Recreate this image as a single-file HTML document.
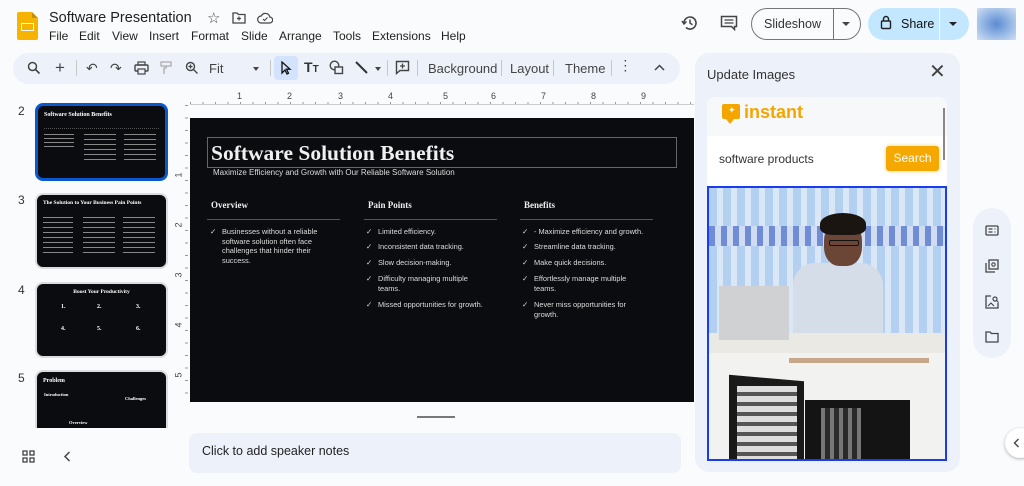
<!DOCTYPE html>
<html><head><meta charset="utf-8"><style>
*{box-sizing:border-box;margin:0;padding:0}
body{width:1024px;height:486px;overflow:hidden;background:#f9fbfd;font-family:"Liberation Sans",Arial,sans-serif;color:#1f1f1f;position:relative}
.a{position:absolute}
.menu span{position:absolute;white-space:nowrap}
.tb{color:#444;font-size:13px}
.sep{position:absolute;top:60px;width:1px;height:16px;background:#c7c7c7}
.slide{background:#0b0c0f;color:#eee}
.serif{font-family:"Liberation Serif",serif;font-weight:bold}
.li{font-size:7.4px;line-height:9.5px;color:#ddd;position:absolute}
.li b{position:absolute;left:-12px;font-weight:normal}
.thumb{position:absolute;left:35px;width:133px;background:#0b0c0f;border-radius:8px;border:2px solid #dadce0;overflow:hidden}
.num{position:absolute;left:18px;font-size:12px;color:#333}
</style></head><body>
<!-- logo -->
<div class="a" style="left:17px;top:12px;width:21px;height:28px;background:#f6b400;border-radius:2px"></div>
<div class="a" style="left:32px;top:12px;width:6px;height:6px;background:#f9fbfd"></div>
<div class="a" style="left:32px;top:12px;width:0;height:0;border-left:6px solid #c98f00;border-top:6px solid transparent"></div>
<div class="a" style="left:21px;top:23px;width:13px;height:8px;border:1.6px solid #fff"></div>
<div class="a" style="left:49px;top:10px;font-size:14.5px">Software Presentation</div>
<div class="a" style="left:207px;top:9px;font-size:15px;color:#444">☆</div>
<svg class="a" style="left:232px;top:12px" width="14" height="12" viewBox="0 0 14 12"><path d="M1 1h4l1.5 1.5H13V11H1z" fill="none" stroke="#444" stroke-width="1.3"/><path d="M7 4.5v4M5 6.5h4" stroke="#444" stroke-width="1.2"/></svg>
<svg class="a" style="left:257px;top:12px" width="16" height="12" viewBox="0 0 16 12"><path d="M4 11h8.5a3 3 0 0 0 .3-6A4.5 4.5 0 0 0 4.3 4 3.5 3.5 0 0 0 4 11z" fill="none" stroke="#444" stroke-width="1.2"/><path d="M6 7l1.5 1.5L10.5 5.5" fill="none" stroke="#444" stroke-width="1.1"/></svg>
<div class="a menu" style="left:0;top:29px;font-size:12px;color:#1f1f1f;width:500px;height:16px"><span style="left:49px">File</span><span style="left:79px">Edit</span><span style="left:112px">View</span><span style="left:149px">Insert</span><span style="left:191px">Format</span><span style="left:241px">Slide</span><span style="left:279px">Arrange</span><span style="left:333px">Tools</span><span style="left:372px">Extensions</span><span style="left:441px">Help</span></div>

<!-- header right -->
<svg class="a" style="left:681px;top:14px" width="18" height="18" viewBox="0 0 18 18"><path d="M3 9a6 6 0 1 1 2 4.5" fill="none" stroke="#444" stroke-width="1.6"/><path d="M1 7l2 3 2.5-2.5" fill="none" stroke="#444" stroke-width="1.5"/><path d="M9 5.5V9l2.5 1.8" fill="none" stroke="#444" stroke-width="1.5"/></svg>
<svg class="a" style="left:720px;top:15px" width="18" height="17" viewBox="0 0 18 17"><path d="M1.5 1.5h15v10h-2v3l-3-3h-10z" fill="none" stroke="#444" stroke-width="1.5"/><path d="M4.5 5h9M4.5 8h9" stroke="#444" stroke-width="1.3"/></svg>
<div class="a" style="left:751px;top:8px;width:110px;height:32px;border:1px solid #747775;border-radius:16px"></div>
<div class="a" style="left:833px;top:8px;width:1px;height:32px;background:#747775"></div>
<div class="a" style="left:764px;top:17px;font-size:12.5px;color:#333">Slideshow</div>
<div class="a" style="left:842px;top:22px;border:4px solid transparent;border-top:4px solid #444"></div>
<div class="a" style="left:868px;top:8px;width:101px;height:32px;background:#c2e7ff;border-radius:16px"></div>
<div class="a" style="left:939px;top:8px;width:1px;height:32px;background:#f9fbfd"></div>
<svg class="a" style="left:880px;top:15px" width="12" height="15" viewBox="0 0 12 15"><rect x="1.5" y="6" width="9" height="7.5" rx="1" fill="none" stroke="#222" stroke-width="1.4"/><path d="M3.5 6V4a2.5 2.5 0 0 1 5 0v2" fill="none" stroke="#222" stroke-width="1.4"/></svg>
<div class="a" style="left:901px;top:17px;font-size:12.5px;color:#111">Share</div>
<div class="a" style="left:949px;top:22px;border:4px solid transparent;border-top:4px solid #222"></div>
<div class="a" style="left:977px;top:8px;width:39px;height:32px;background:radial-gradient(ellipse at 50% 50%,#5b8bd0 0%,#8fb2e3 45%,#cfe0f3 100%)"></div>

<!-- toolbar -->
<div class="a" style="left:13px;top:53px;width:667px;height:31px;background:#edf2fa;border-radius:16px"></div>
<svg class="a" style="left:27px;top:61px" width="14" height="14" viewBox="0 0 14 14"><circle cx="5.5" cy="5.5" r="4" fill="none" stroke="#444" stroke-width="1.5"/><path d="M8.5 8.5l4 4" stroke="#444" stroke-width="1.6"/></svg>
<div class="a tb" style="left:55px;top:58px;font-size:17px">+</div>
<div class="sep" style="left:76px"></div>
<div class="a tb" style="left:86px;top:60px;font-size:14px">↶</div>
<div class="a tb" style="left:110px;top:60px;font-size:14px">↷</div>
<svg class="a" style="left:134px;top:61px" width="15" height="14" viewBox="0 0 15 14"><rect x="1" y="4" width="13" height="6" rx="1" fill="none" stroke="#444" stroke-width="1.4"/><rect x="4" y="1" width="7" height="3" fill="none" stroke="#444" stroke-width="1.2"/><rect x="4" y="8" width="7" height="5" fill="#edf2fa" stroke="#444" stroke-width="1.2"/></svg>
<svg class="a" style="left:160px;top:61px" width="12" height="14" viewBox="0 0 12 14"><rect x="1" y="1" width="10" height="4" fill="none" stroke="#aaa" stroke-width="1.2"/><path d="M6 5v2H4v6" fill="none" stroke="#aaa" stroke-width="1.3"/></svg>
<svg class="a" style="left:185px;top:61px" width="14" height="14" viewBox="0 0 14 14"><circle cx="5.5" cy="5.5" r="4" fill="none" stroke="#444" stroke-width="1.4"/><path d="M8.5 8.5l4 4M5.5 3.5v4M3.5 5.5h4" stroke="#444" stroke-width="1.3"/></svg>
<div class="a tb" style="left:209px;top:61px">Fit</div>
<div class="a" style="left:253px;top:67px;border:3.5px solid transparent;border-top:4px solid #444"></div>
<div class="sep" style="left:270px"></div>
<div class="a" style="left:274px;top:56px;width:24px;height:24px;background:#d3e3fd;border-radius:4px"></div>
<svg class="a" style="left:280px;top:61px" width="12" height="14" viewBox="0 0 12 14"><path d="M2 1v11l3-3 2 4 1.5-.8-2-4H10z" fill="none" stroke="#111" stroke-width="1.3"/></svg>
<div class="a tb" style="left:304px;top:59px;font-size:14px;font-weight:bold;color:#333">T<span style="font-size:10px">T</span></div>
<svg class="a" style="left:329px;top:60px" width="15" height="15" viewBox="0 0 15 15"><circle cx="5.5" cy="5.5" r="4.3" fill="none" stroke="#444" stroke-width="1.4"/><rect x="6" y="7" width="7.5" height="6.5" fill="#edf2fa" stroke="#444" stroke-width="1.4"/></svg>
<svg class="a" style="left:355px;top:61px" width="13" height="13" viewBox="0 0 13 13"><path d="M1 1l11 11" stroke="#333" stroke-width="2"/></svg>
<div class="a" style="left:375px;top:67px;border:3.5px solid transparent;border-top:4px solid #444"></div>
<div class="sep" style="left:387px"></div>
<svg class="a" style="left:395px;top:60px" width="15" height="15" viewBox="0 0 15 15"><path d="M1.5 1.5h12v9H5l-3.5 3z" fill="none" stroke="#444" stroke-width="1.4"/><path d="M7.5 3.5v5M5 6h5" stroke="#444" stroke-width="1.3"/></svg>
<div class="sep" style="left:417px"></div>
<div class="a tb" style="left:428px;top:61px">Background</div>
<div class="sep" style="left:501px"></div>
<div class="a tb" style="left:510px;top:61px">Layout</div>
<div class="sep" style="left:553px"></div>
<div class="a tb" style="left:565px;top:61px">Theme</div>
<div class="sep" style="left:611px"></div>
<div class="a tb" style="left:624px;top:59px;font-weight:bold;line-height:5px;font-size:10px">·<br>·<br>·</div>
<svg class="a" style="left:654px;top:64px" width="11" height="7" viewBox="0 0 11 7"><path d="M1 6l4.5-4.5L10 6" fill="none" stroke="#444" stroke-width="1.5"/></svg>

<!-- filmstrip -->
<div class="num" style="top:104px">2</div>
<div class="thumb" style="top:103px;height:78px;border:3px solid #0b57d0">
 <div class="serif a" style="left:6px;top:6px;font-size:6px;color:#fff">Software Solution Benefits</div>
 <div class="a" style="left:6px;top:22px;width:115px;height:1px;border-top:1px dotted #555"></div>
 <div class="a" style="left:6px;top:28px;width:30px;height:16px;background:repeating-linear-gradient(#888 0 1px,transparent 1px 4px)"></div>
 <div class="a" style="left:46px;top:28px;width:32px;height:28px;background:repeating-linear-gradient(#888 0 1px,transparent 1px 5px)"></div>
 <div class="a" style="left:86px;top:28px;width:32px;height:28px;background:repeating-linear-gradient(#888 0 1px,transparent 1px 5px)"></div>
</div>
<div class="num" style="top:193px">3</div>
<div class="thumb" style="top:193px;height:76px">
 <div class="serif a" style="left:6px;top:5px;font-size:5.5px;color:#fff">The Solution to Your Business Pain Points</div>
 <div class="a" style="left:6px;top:22px;width:30px;height:40px;background:repeating-linear-gradient(#888 0 1px,transparent 1px 5px)"></div>
 <div class="a" style="left:46px;top:22px;width:32px;height:40px;background:repeating-linear-gradient(#888 0 1px,transparent 1px 5px)"></div>
 <div class="a" style="left:86px;top:22px;width:32px;height:40px;background:repeating-linear-gradient(#888 0 1px,transparent 1px 5px)"></div>
</div>
<div class="num" style="top:283px">4</div>
<div class="thumb" style="top:282px;height:76px">
 <div class="serif a" style="left:0;width:129px;text-align:center;top:5px;font-size:5.5px;color:#fff">Boost Your Productivity</div>
 <div class="serif a" style="left:24px;top:20px;font-size:6px;color:#fff">1.</div><div class="serif a" style="left:60px;top:20px;font-size:6px;color:#fff">2.</div><div class="serif a" style="left:99px;top:20px;font-size:6px;color:#fff">3.</div>
 <div class="serif a" style="left:24px;top:42px;font-size:6px;color:#fff">4.</div><div class="serif a" style="left:60px;top:42px;font-size:6px;color:#fff">5.</div><div class="serif a" style="left:99px;top:42px;font-size:6px;color:#fff">6.</div>
</div>
<div class="num" style="top:371px">5</div>
<div class="thumb" style="top:370px;height:58px;border-bottom:none;border-radius:8px 8px 0 0">
 <div class="serif a" style="left:6px;top:6px;font-size:6px;color:#fff">Problem</div>
 <div class="serif a" style="left:7px;top:20px;font-size:4.5px;color:#fff">Introduction</div>
 <div class="serif a" style="left:88px;top:24px;font-size:4.5px;color:#fff">Challenges</div>
 <div class="serif a" style="left:32px;top:48px;font-size:4.5px;color:#fff">Overview</div>
</div>

<!-- rulers -->
<div class="a" style="left:190px;top:92px;width:504px;height:13px;background:repeating-linear-gradient(90deg,#999 0 1px,transparent 1px 12.5px) bottom/100% 3px no-repeat"></div>
<div class="a" style="left:190px;top:104px;width:504px;height:1px;background:#ccc"></div>
<div class="a" style="left:170px;top:105px;width:18px;height:300px;background:repeating-linear-gradient(#999 0 1px,transparent 1px 12.5px) right/3px 100% no-repeat"></div>
<div class="a" style="left:237px;top:91px;font-size:9px;color:#444">1</div>
<div class="a" style="left:287px;top:91px;font-size:9px;color:#444">2</div>
<div class="a" style="left:338px;top:91px;font-size:9px;color:#444">3</div>
<div class="a" style="left:388px;top:91px;font-size:9px;color:#444">4</div>
<div class="a" style="left:443px;top:91px;font-size:9px;color:#444">5</div>
<div class="a" style="left:491px;top:91px;font-size:9px;color:#444">6</div>
<div class="a" style="left:541px;top:91px;font-size:9px;color:#444">7</div>
<div class="a" style="left:591px;top:91px;font-size:9px;color:#444">8</div>
<div class="a" style="left:641px;top:91px;font-size:9px;color:#444">9</div>
<div class="a" style="left:176px;top:170px;font-size:9px;color:#444;transform:rotate(-90deg)">1</div>
<div class="a" style="left:176px;top:220px;font-size:9px;color:#444;transform:rotate(-90deg)">2</div>
<div class="a" style="left:176px;top:270px;font-size:9px;color:#444;transform:rotate(-90deg)">3</div>
<div class="a" style="left:176px;top:320px;font-size:9px;color:#444;transform:rotate(-90deg)">4</div>
<div class="a" style="left:176px;top:370px;font-size:9px;color:#444;transform:rotate(-90deg)">5</div>

<!-- slide -->
<div class="a slide" style="left:190px;top:118px;width:504px;height:284px">
 <div class="a" style="left:17px;top:19px;width:470px;height:31px;border:1px solid #666"></div>
 <div class="a serif" style="left:21px;top:23px;font-size:21.5px;color:#f0f0f0">Software Solution Benefits</div>
 <div class="a" style="left:23px;top:50px;font-size:8px;color:#ddd">Maximize Efficiency and Growth with Our Reliable Software Solution</div>
 <div class="a serif" style="left:21px;top:82px;font-size:9px;color:#eee">Overview</div>
 <div class="a serif" style="left:178px;top:82px;font-size:9px;color:#eee">Pain Points</div>
 <div class="a serif" style="left:334px;top:82px;font-size:9px;color:#eee">Benefits</div>
 <div class="a" style="left:17px;top:101px;width:133px;height:1px;background:#555"></div>
 <div class="a" style="left:174px;top:101px;width:133px;height:1px;background:#555"></div>
 <div class="a" style="left:330px;top:101px;width:133px;height:1px;background:#555"></div>
 <div class="li" style="left:32px;top:109px;width:110px"><b>✓</b>Businesses without a reliable software solution often face challenges that hinder their success.</div>
 <div class="li" style="left:188px;top:109px"><b>✓</b>Limited efficiency.</div>
 <div class="li" style="left:188px;top:124px"><b>✓</b>Inconsistent data tracking.</div>
 <div class="li" style="left:188px;top:140px"><b>✓</b>Slow decision-making.</div>
 <div class="li" style="left:188px;top:156px;width:110px"><b>✓</b>Difficulty managing multiple teams.</div>
 <div class="li" style="left:188px;top:182px"><b>✓</b>Missed opportunities for growth.</div>
 <div class="li" style="left:344px;top:109px"><b>✓</b>- Maximize efficiency and growth.</div>
 <div class="li" style="left:344px;top:124px"><b>✓</b>Streamline data tracking.</div>
 <div class="li" style="left:344px;top:140px"><b>✓</b>Make quick decisions.</div>
 <div class="li" style="left:344px;top:156px;width:110px"><b>✓</b>Effortlessly manage multiple teams.</div>
 <div class="li" style="left:344px;top:182px;width:110px"><b>✓</b>Never miss opportunities for growth.</div>
</div>
<div class="a" style="left:417px;top:416px;width:38px;height:2px;background:#777"></div>

<!-- notes -->
<div class="a" style="left:189px;top:433px;width:492px;height:40px;background:#edf2fa;border-radius:8px"></div>
<div class="a" style="left:202px;top:444px;font-size:12.5px;color:#1f1f1f">Click to add speaker notes</div>
<svg class="a" style="left:22px;top:450px" width="13" height="13" viewBox="0 0 13 13"><g fill="none" stroke="#444" stroke-width="1.3"><rect x="1" y="1" width="4" height="4"/><rect x="8" y="1" width="4" height="4"/><rect x="1" y="8" width="4" height="4"/><rect x="8" y="8" width="4" height="4"/></g></svg>
<svg class="a" style="left:63px;top:451px" width="8" height="11" viewBox="0 0 8 11"><path d="M6.5 1L2 5.5 6.5 10" fill="none" stroke="#444" stroke-width="1.5"/></svg>

<!-- side panel -->
<div class="a" style="left:695px;top:53px;width:265px;height:419px;background:#edf2fa;border-radius:14px"></div>
<div class="a" style="left:707px;top:67px;font-size:13px;color:#333">Update Images</div>
<div class="a" style="left:929px;top:62px;font-size:20px;color:#444;line-height:20px">✕</div>
<div class="a" style="left:707px;top:97px;width:240px;height:90px;background:#fff;border-radius:8px 8px 0 0"></div>
<div class="a" style="left:707px;top:97px;width:240px;height:39px;background:#f7f8fa;border-radius:8px 8px 0 0"></div>
<div class="a" style="left:722px;top:104px;width:18px;height:15px;background:#f5a500;border-radius:2px"></div>
<div class="a" style="left:726px;top:119px;border:4px solid transparent;border-top:5px solid #f5a500"></div>
<div class="a" style="left:728px;top:105px;font-size:9px;color:#fff">✦</div>
<div class="a" style="left:744px;top:102px;font-size:18px;font-weight:bold;color:#f5a500">instant</div>
<div class="a" style="left:943px;top:108px;width:2px;height:52px;background:#888"></div>
<div class="a" style="left:719px;top:152px;font-size:12px;color:#333">software products</div>
<div class="a" style="left:886px;top:146px;width:53px;height:25px;background:#f5a800;border-radius:3px;box-shadow:0 0 4px #f9d07a;color:#fff;font-size:12px;text-align:center;line-height:25px">Search</div>
<!-- images -->
<div class="a" style="left:707px;top:186px;width:240px;height:275px;border:2px solid #1a3cf0;overflow:hidden;background:#fff">
 <div class="a" style="left:0;top:0;width:236px;height:145px;background:repeating-linear-gradient(90deg,#b4d0f0 0 8px,#d9e7f7 8px 14px)"></div>
 <div class="a" style="left:0;top:38px;width:236px;height:20px;background:repeating-linear-gradient(90deg,#6f8cd4 0 6px,#d0dcf2 6px 12px)"></div>
 <div class="a" style="left:0;top:145px;width:236px;height:20px;background:#ebe9e4"></div>
 <div class="a" style="left:10px;top:98px;width:70px;height:54px;background:#cfd1d3"></div>
 <div class="a" style="left:84px;top:75px;width:90px;height:70px;background:#d4dde8;border-radius:22px 22px 0 0"></div>
 <div class="a" style="left:115px;top:32px;width:38px;height:46px;background:#6b4636;border-radius:45% 45% 40% 40%"></div>
 <div class="a" style="left:111px;top:25px;width:46px;height:22px;background:#1b1512;border-radius:50% 50% 30% 30%"></div>
 <div class="a" style="left:120px;top:52px;width:30px;height:6px;border:1.5px solid #111;border-radius:2px"></div>
 <div class="a" style="left:0;top:165px;width:236px;height:110px;background:#f2f2f1"></div>
 <div class="a" style="left:80px;top:170px;width:140px;height:5px;background:#c7a78a"></div>
 <div class="a" style="left:20px;top:190px;width:75px;height:90px;background:#1a1a1a;transform:skewY(5deg)"></div>
 <div class="a" style="left:28px;top:198px;width:60px;height:80px;background:repeating-linear-gradient(#ddd 0 6px,#555 6px 10px)"></div>
 <div class="a" style="left:96px;top:212px;width:105px;height:70px;background:#141414"></div>
 <div class="a" style="left:112px;top:220px;width:40px;height:60px;background:repeating-linear-gradient(90deg,#777 0 4px,#2a2a2a 4px 9px)"></div>
</div>

<!-- right rail -->
<div class="a" style="left:973px;top:208px;width:38px;height:150px;background:#edf2fa;border-radius:19px"></div>
<svg class="a" style="left:985px;top:225px" width="14" height="11" viewBox="0 0 14 11"><rect x="1" y="1" width="12" height="9" rx="1" fill="none" stroke="#444" stroke-width="1.3"/><path d="M3.5 4h4M3.5 7h4M9.5 4h1M9.5 7h1" stroke="#444" stroke-width="1.2"/></svg>
<svg class="a" style="left:985px;top:259px" width="14" height="14" viewBox="0 0 14 14"><rect x="4" y="1" width="9" height="9" fill="none" stroke="#444" stroke-width="1.3"/><path d="M1 4v9h9" fill="none" stroke="#444" stroke-width="1.3"/><circle cx="8.5" cy="5.5" r="1.7" fill="none" stroke="#444" stroke-width="1.1"/></svg>
<svg class="a" style="left:985px;top:295px" width="14" height="14" viewBox="0 0 14 14"><path d="M6 1H1v12h12V8" fill="none" stroke="#444" stroke-width="1.3"/><circle cx="10" cy="4" r="2" fill="none" stroke="#444" stroke-width="1.2"/><path d="M11.5 5.5l2 2M3 11l3-3 3 3" fill="none" stroke="#444" stroke-width="1.1"/></svg>
<svg class="a" style="left:985px;top:331px" width="14" height="12" viewBox="0 0 14 12"><path d="M1 1h4l1.5 1.5H13V11H1z" fill="none" stroke="#444" stroke-width="1.3"/></svg>
<div class="a" style="left:1005px;top:428px;width:30px;height:30px;border-radius:50%;background:#fff;box-shadow:0 1px 3px rgba(0,0,0,.3)"></div>
<svg class="a" style="left:1013px;top:438px" width="7" height="10" viewBox="0 0 7 10"><path d="M5.5 1L1.5 5l4 4" fill="none" stroke="#444" stroke-width="1.4"/></svg>
</body></html>
